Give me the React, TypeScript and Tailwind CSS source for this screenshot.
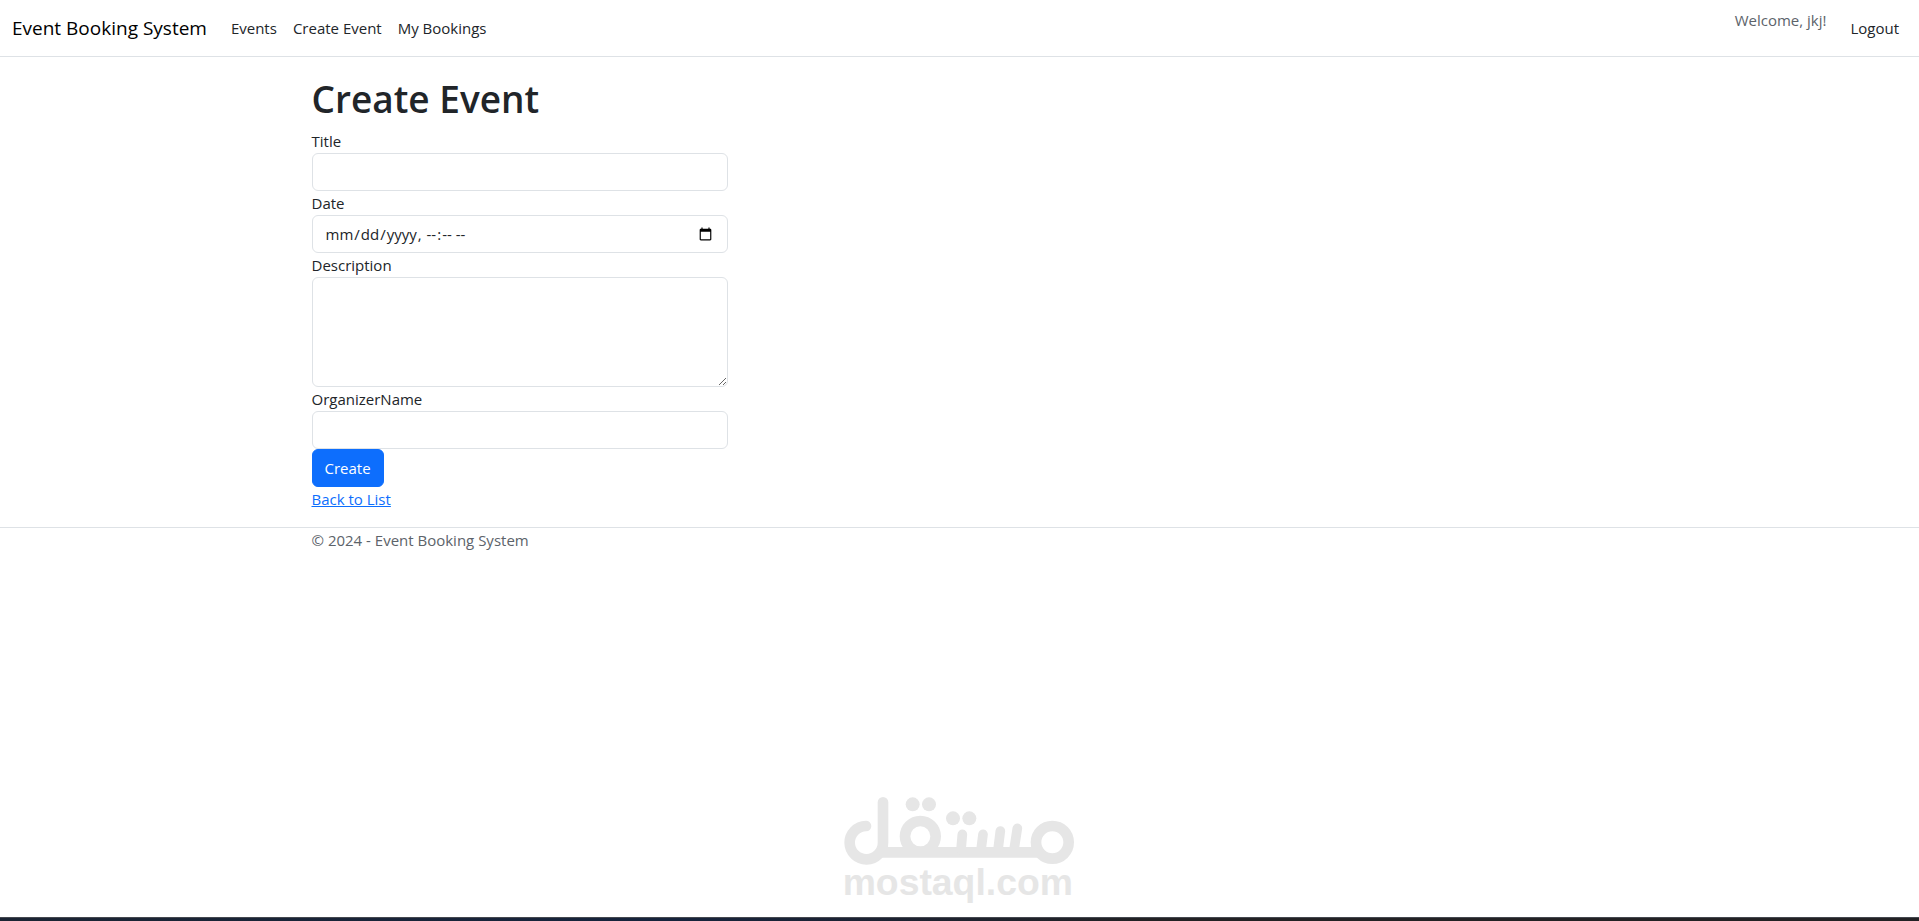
import type { ReactNode } from "react";

function NavLink({ children }: { children: ReactNode }) {
  return (
    <a href="#" className="block p-2">
      {children}
    </a>
  );
}

function Navbar() {
  return (
    <header>
      <nav className="mb-4 flex items-center border-b border-[#dee2e6] px-3 py-2">
        <a href="#" className="mr-4 text-[19px] leading-8 text-black">
          Event Booking System
        </a>
        <ul className="flex grow">
          <li>
            <NavLink>Events</NavLink>
          </li>
          <li>
            <NavLink>Create Event</NavLink>
          </li>
          <li>
            <NavLink>My Bookings</NavLink>
          </li>
        </ul>
        <ul className="flex">
          <li className="mr-4 text-[#5c636a]">Welcome, jkj!</li>
          <li>
            <button type="button" className="block p-2">
              Logout
            </button>
          </li>
        </ul>
      </nav>
    </header>
  );
}

function MostaqlLogo() {
  return (
    <svg
      viewBox="30 36 717 330"
      className="h-[110px] w-[239px]"
      fill="none"
      stroke="#e6e6e6"
      strokeWidth="32"
      strokeLinecap="round"
      role="img"
      aria-label="mostaql.com"
    >
      <circle cx="667" cy="172" r="49" />
      <circle cx="271" cy="154" r="46" />
      <path d="M108 123A50 50 0 1 0 159 172V52" />
      <path d="M150 202H632" strokeLinecap="butt" />
      <path d="M397 148L393 195M459 148L453 195M511 138L504 195M562 130L552 195" strokeWidth="29" />
      <g fill="#e6e6e6" stroke="none">
        <circle cx="248" cy="58" r="21" />
        <circle cx="297" cy="58" r="21" />
        <circle cx="369" cy="100" r="21" />
        <circle cx="418" cy="100" r="21" />
        <text x="38" y="330" className="font-['Liberation_Sans',sans-serif] text-[112px] font-bold">
          mostaql.com
        </text>
      </g>
    </svg>
  );
}

export default function App() {
  return (
    <div className="flex min-h-screen flex-col bg-white font-['Open_Sans','Noto_Sans',sans-serif] text-[15px] leading-6 text-[#212529]">
      <Navbar />
      <main className="mx-auto w-full max-w-[1320px] px-3 pb-4">
        <h1 className="mb-1 text-[37px] leading-[52px] font-semibold">Create Event</h1>
        <form action="#" method="POST" className="md:w-[416px]">
          <div>
            <label htmlFor="title" className="block">
              Title
            </label>
            <input
              type="text"
              id="title"
              className="block h-[38px] w-full rounded-md border border-[#dee2e6] px-3"
            />
          </div>
          <div>
            <label htmlFor="date" className="block">
              Date
            </label>
            <input
              type="datetime-local"
              id="date"
              className="block h-[38px] w-full rounded-md border border-[#dee2e6] px-3"
            />
          </div>
          <div>
            <label htmlFor="description" className="block">
              Description
            </label>
            <textarea
              id="description"
              className="block h-[110px] w-full rounded-md border border-[#dee2e6] px-3 py-1.5"
            />
          </div>
          <div>
            <label htmlFor="organizer" className="block">
              OrganizerName
            </label>
            <input
              type="text"
              id="organizer"
              className="block h-[38px] w-full rounded-md border border-[#dee2e6] px-3"
            />
          </div>
          <button
            type="submit"
            className="block h-[38px] rounded-md border border-[#0d6efd] bg-[#0d6efd] px-3 text-white"
          >
            Create
          </button>
        </form>
        <a href="#" className="text-[#0d6efd] underline">
          Back to List
        </a>
      </main>
      <footer className="border-t border-[#dee2e6] text-[#5c636a]">
        <div className="mx-auto w-full max-w-[1320px] px-3">© 2024 - Event Booking System</div>
      </footer>
      <div className="mt-auto flex justify-center pb-2.5">
        <MostaqlLogo />
      </div>
      <div className="h-1 border-t border-[#45484f] bg-linear-to-r from-[#1b2433] via-[#16233c] via-35% to-[#222124] to-60%" />
    </div>
  );
}
